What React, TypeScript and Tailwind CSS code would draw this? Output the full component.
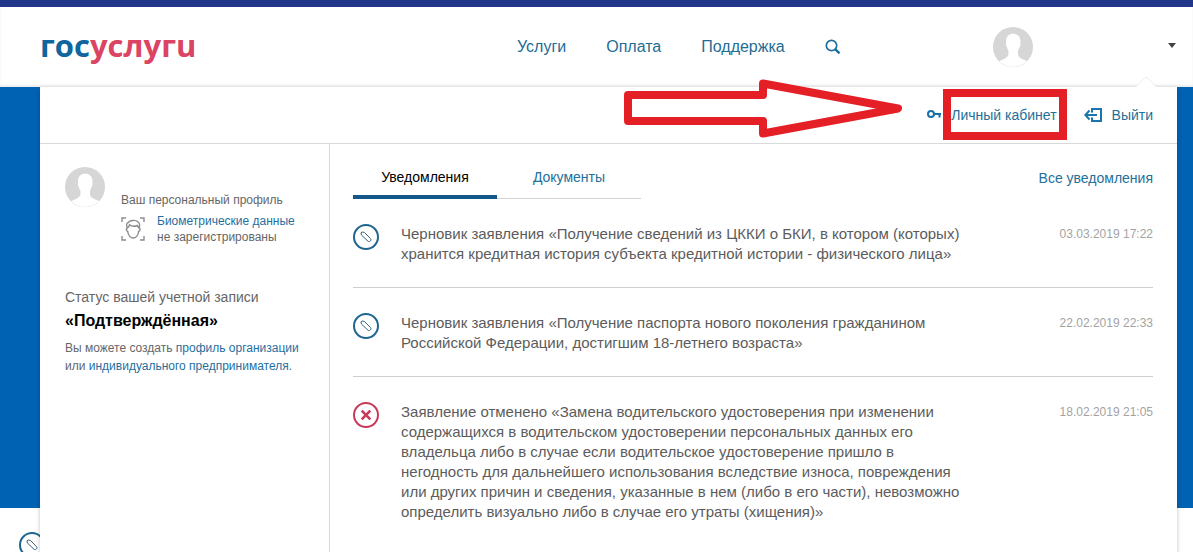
import React, { useState } from "react";
import clsx from "clsx";

type Notice = {
  id: number;
  kind: "draft" | "cancelled";
  text: string;
  date: string;
};

const NOTICES: Notice[] = [
  {
    id: 1,
    kind: "draft",
    text: "Черновик заявления «Получение сведений из ЦККИ о БКИ, в котором (которых) хранится кредитная история субъекта кредитной истории - физического лица»",
    date: "03.03.2019 17:22",
  },
  {
    id: 2,
    kind: "draft",
    text: "Черновик заявления «Получение паспорта нового поколения гражданином Российской Федерации, достигшим 18-летнего возраста»",
    date: "22.02.2019 22:33",
  },
  {
    id: 3,
    kind: "cancelled",
    text: "Заявление отменено «Замена водительского удостоверения при изменении содержащихся в водительском удостоверении персональных данных его владельца либо в случае если водительское удостоверение пришло в негодность для дальнейшего использования вследствие износа, повреждения или других причин и сведения, указанные в нем (либо в его части), невозможно определить визуально либо в случае его утраты (хищения)»",
    date: "18.02.2019 21:05",
  },
];

const NAV = ["Услуги", "Оплата", "Поддержка"];
const TABS = ["Уведомления", "Документы"];

function Avatar() {
  return (
    <svg viewBox="0 0 40 40" className="size-10 shrink-0" aria-hidden="true">
      <circle cx="20" cy="20" r="20" fill="#d6d6d6" />
      <path
        d="M13 14c0-4.500 3-7.200 7.200-7.200S27.500 9.500 27.500 14c0 .8-.1 1.500-.2 2.200.6.500.4 2.400-.5 3-.4 1.800-.9 3-1.800 4v4.600c.6 2.400 3 4 9.500 6.400A20 20 0 0 1 20 40 20 20 0 0 1 6 34.200c6-2.400 8.800-4 9.400-6.400v-4.600c-.9-1-1.400-2.200-1.800-4-.9-.6-1-2.500-.4-3-.1-.7-.2-1.400-.2-2.200z"
        fill="#fff"
      />
      <path d="M6.500 34.800a19.600 19.600 0 0 0 27 0" fill="none" stroke="#f0f0f0" strokeWidth="1" />
    </svg>
  );
}

function SearchIcon() {
  return (
    <svg viewBox="0 0 16 16" className="size-4" fill="none" stroke="#1d6f9f" aria-hidden="true">
      <circle cx="6.500" cy="6.500" r="5.200" strokeWidth="1.700" />
      <path d="M10.200 10.200L14.500 14.300" strokeWidth="2.400" />
    </svg>
  );
}

function KeyIcon() {
  return (
    <svg viewBox="0 0 14 10" className="mb-0.5 h-2.5 w-3.5" fill="none" stroke="#1a6ea8" strokeWidth="2" aria-hidden="true">
      <circle cx="4" cy="5" r="3" />
      <path d="M7 5h7M12.500 5v3.500" />
    </svg>
  );
}

function ExitIcon() {
  return (
    <svg viewBox="0 0 18 16" className="h-4 w-[18px]" fill="none" stroke="#1a75ad" strokeWidth="2" aria-hidden="true">
      <path d="M8 5.500V2h9v12H8v-3.500" />
      <path d="M13 8H2M5.500 3.500L1.300 8l4.200 4.500" />
    </svg>
  );
}

function FaceIcon() {
  return (
    <svg viewBox="0 0 24 24" className="size-6 shrink-0" fill="none" stroke="#8d8d8d" strokeWidth="1.400" aria-hidden="true">
      <path d="M1 5V1h4M19 1h4v4M1 19v4h4M19 23h4v-4" />
      <path d="M6.500 11c-1.600 0-1.500 3 .2 3.300.5 3.700 2.700 6.700 5.500 6.700s5-3 5.500-6.700c1.700-.3 1.800-3.300.3-3.300" />
      <path d="M6.500 11c-1.500-2.500-1-5 .8-5.500C8.500 3.200 15 2.500 17 5c2 1.200 2 4 1 6-.8-.8-1.300-1.500-1.500-2.500-3 1.200-6 1-8-.7-.2 1.500-.8 2.500-2 3.200z" />
    </svg>
  );
}

function StatusIcon({ kind }: { kind: Notice["kind"] }) {
  if (kind === "cancelled") {
    return (
      <svg viewBox="0 0 26 26" className="size-[26px] shrink-0" fill="none" aria-hidden="true">
        <circle cx="13" cy="13" r="12" stroke="#c9395a" strokeWidth="2" />
        <path d="M8.700 8.700l8.600 8.600M17.300 8.700l-8.600 8.600" stroke="#c9395a" strokeWidth="2.600" />
      </svg>
    );
  }
  return (
    <svg viewBox="0 0 26 26" className="size-[26px] shrink-0" fill="none" aria-hidden="true">
      <circle cx="13" cy="13" r="12" stroke="#1f6592" strokeWidth="2" />
      <path
        d="M8.400 11L8 8.800 9.200 8 11.400 8.400 17.600 14.700c1.200 1.500-1 3.800-2.500 2.600z"
        stroke="#35607c"
        strokeWidth="1"
        strokeLinejoin="round"
      />
    </svg>
  );
}

function Header() {
  return (
    <header className="flex h-20 items-center bg-white pr-[17px] pl-10 shadow-[inset_0_-2px_2px_#ededed]">
      <a
        href="#"
        aria-label="госуслуги"
        className="w-[477px] shrink-0 pb-1 font-['Open_Sans','Noto_Sans',sans-serif] text-[31px] leading-10 font-bold text-[#dc4463]"
      >
        <span className="text-[#0f659d]">гос</span>услугu
      </a>
      <nav className="flex items-center gap-10 text-base text-[#1f6c94]">
        {NAV.map((item) => (
          <a key={item} href="#">
            {item}
          </a>
        ))}
        <button type="button" aria-label="Поиск">
          <SearchIcon />
        </button>
      </nav>
      <button type="button" aria-label="Меню пользователя" className="ml-auto flex w-[183px] items-center justify-between">
        <Avatar />
        <svg viewBox="0 0 8 5" className="mb-1 h-[5px] w-2" fill="#444" aria-hidden="true">
          <path d="M0 0h8L4 5z" />
        </svg>
      </button>
    </header>
  );
}

function AccountBar() {
  return (
    <div className="relative flex h-[57px] items-center justify-end border-b border-[#d9d9d9] pr-6 text-sm text-[#23709a]">
      {/* Уголок меню под аватаром */}
      <svg viewBox="0 0 22 12" className="absolute -top-[11px] right-5 h-3 w-[22px]" aria-hidden="true">
        <path d="M0 12L11 1l11 11z" fill="#fff" />
        <path d="M0 11L11 1l11 10" fill="none" stroke="#ececec" />
      </svg>
      {/* Красная стрелка и рамка-подсказка */}
      <svg
        viewBox="0 0 280 60"
        className="absolute -top-2 right-[274px] h-[60px] w-[280px]"
        fill="none"
        stroke="#e41f26"
        strokeWidth="8"
        strokeLinejoin="round"
        aria-hidden="true"
      >
        <path d="M5 16h135V4.500L275 29.500 140 54.500V42H5z" />
      </svg>
      <KeyIcon />
      <a href="#" className="mb-0.5 ml-0.5 border-8 border-[#e41f26] pr-0.5 pt-2 pb-[7px] leading-5 whitespace-nowrap">
        Личный кабинет
      </a>
      <a href="#" className="ml-[17px] flex items-center gap-2.5">
        <ExitIcon />
        Выйти
      </a>
    </div>
  );
}

function Profile() {
  return (
    <aside className="w-[290px] shrink-0 border-r border-[#d9d9d9] pt-[23px] pl-[25px] text-xs text-[#666]">
      <div className="flex gap-4">
        <Avatar />
        <div className="pt-6">
          <p className="leading-[18px]">Ваш персональный профиль</p>
          <div className="mt-1 flex items-center gap-3 leading-4">
            <FaceIcon />
            <p className="whitespace-nowrap">
              <a href="#" className="text-[#1f6fa0]">
                Биометрические данные
              </a>
              <br />
              не зарегистрированы
            </p>
          </div>
        </div>
      </div>
      <h2 className="mt-[42px] text-sm leading-5">Статус вашей учетной записи</h2>
      <p className="mt-1 text-base leading-5 font-bold text-black">«Подтверждённая»</p>
      <p className="mt-2 leading-[18px] whitespace-nowrap">
        Вы можете создать{" "}
        <a href="#" className="text-[#1f6fa0]">
          профиль организации
        </a>
        <br />
        или{" "}
        <a href="#" className="text-[#1f6fa0]">
          индивидуального предпринимателя
        </a>
        .
      </p>
    </aside>
  );
}

function Notifications() {
  const [active, setActive] = useState(TABS[0]);

  return (
    <section className="min-w-0 flex-1 pt-[17px] pr-6 pl-[23px]">
      <div className="flex items-start justify-between">
        <div role="tablist" className="flex">
          {TABS.map((tab) => (
            <button
              key={tab}
              type="button"
              role="tab"
              aria-selected={tab === active}
              onClick={() => setActive(tab)}
              className={clsx(
                "h-[38px] w-36 text-sm leading-5",
                tab === active
                  ? "border-b-4 border-[#12598a] pb-0.5 text-black"
                  : "border-b border-[#d3d3d3] pb-[5px] text-[#23709a]"
              )}
            >
              {tab}
            </button>
          ))}
        </div>
        <a href="#" className="pt-[7px] text-sm leading-5 text-[#23709a]">
          Все уведомления
        </a>
      </div>
      <ul>
        {NOTICES.map((n) => (
          <li key={n.id} className="flex items-start border-b border-[#cfcfcf] pt-[25px] pb-[23px] last:border-b-0">
            <StatusIcon kind={n.kind} />
            <p className="ml-[22px] max-w-[564px] text-[15px] leading-5 text-[#5c5c5c]">{n.text}</p>
            <time className="ml-auto pl-4 text-xs leading-5 whitespace-nowrap text-[#a3a3a3]">{n.date}</time>
          </li>
        ))}
      </ul>
    </section>
  );
}

export default function App() {
  return (
    <div className="flex min-h-screen flex-col bg-white font-['Liberation_Sans',Arial,sans-serif]">
      <div className="h-[7px] bg-[#21358a]" />
      <Header />
      <main className="grid flex-1">
        {/* Страница под раскрытым меню */}
        <div className="col-start-1 row-start-1">
          <div className="h-[421px] bg-[#0062b2]" />
          <div className="pt-6 pl-[19px]">
            <StatusIcon kind="draft" />
          </div>
        </div>
        {/* Раскрытое меню личного кабинета */}
        <div className="relative col-start-1 row-start-1 mr-4 ml-10 flex flex-col bg-white shadow-[0_2px_4px_rgba(0,0,0,0.25)]">
          <AccountBar />
          <div className="flex flex-1">
            <Profile />
            <Notifications />
          </div>
        </div>
      </main>
    </div>
  );
}
